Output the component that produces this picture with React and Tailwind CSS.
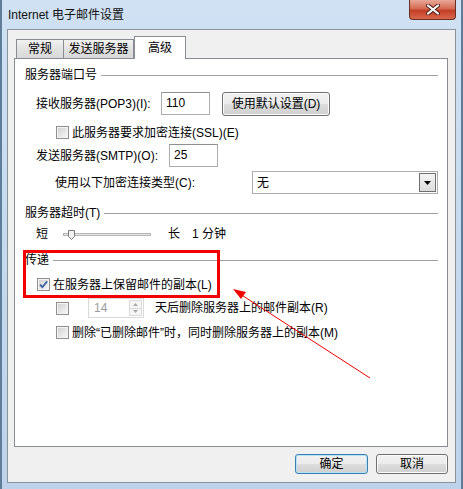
import React from 'react';

const Checkbox = ({ checked }) => (
  <span className="flex h-[13px] w-[13px] shrink-0 items-center justify-center border border-[#8f8f8f] bg-white">
    <span className="flex h-[11px] w-[11px] items-center justify-center border border-[#f4f4f4] bg-gradient-to-br from-[#d2d2d2] to-[#f6f6f6]">
      {checked && (
        <svg width="9" height="9" viewBox="0 0 9 9">
          <path d="M1 4.6 L3.4 7.2 L8.2 1.2" fill="none" stroke="#3b5ea3" strokeWidth="1.8" />
        </svg>
      )}
    </span>
  </span>
);

const Group = ({ title }) => (
  <div className="flex h-[16px] items-center">
    <span className="pr-[4px]">{title}</span>
    <span className="h-px flex-1 bg-[#a0a0a0]" />
  </div>
);

const btn =
  'flex items-center justify-center rounded-[3px] border bg-[linear-gradient(to_bottom,#f2f2f2_0%,#ebebeb_48%,#dddddd_52%,#cfcfcf_100%)]';

const App = () => {
  return (
    <div className="relative h-[489px] w-[463px] overflow-hidden border-x-2 border-[#5f7d99] bg-[linear-gradient(to_bottom,#cfe1f3,#bcd3eb)] text-[12px] leading-[14px] text-black [font-family:'Liberation_Sans','Noto_Sans_CJK_SC',sans-serif]">
      {/* title bar */}
      <div className="flex h-[29px] items-start justify-between">
        <span className="ml-[6px] mt-[8px] text-[12px] leading-[14px] text-[#111]">Internet 电子邮件设置</span>
        <div className="mr-[5px] flex h-[20px] w-[47px] items-center justify-center rounded-b-[4px] border border-t-0 border-[#6b2e22] bg-[linear-gradient(to_bottom,#e8a898_0%,#d46a52_45%,#c43f27_55%,#d8674c_100%)]">
          <svg width="14" height="11" viewBox="0 0 14 11">
            <path d="M2 1.5 L12 9.5 M12 1.5 L2 9.5" stroke="#4a1e16" strokeWidth="4" strokeLinecap="round" />
            <path d="M2 1.5 L12 9.5 M12 1.5 L2 9.5" stroke="#ffffff" strokeWidth="2.2" strokeLinecap="round" />
          </svg>
        </div>
      </div>

      {/* dialog body */}
      <div className="mx-[5px] flex h-[454px] flex-col border border-[#8a929a] bg-[#f0f0f0]">
        {/* tabs */}
        <div className="ml-[8px] mt-[6px] flex h-[23px] items-end">
          <div className="mb-px flex h-[19px] w-[48px] items-center justify-center border border-b-0 border-[#898c95] bg-[linear-gradient(to_bottom,#f2f2f2,#e2e2e2_50%,#d8d8d8)]">
            常规
          </div>
          <div className="mb-px flex h-[19px] w-[70px] items-center justify-center border border-b-0 border-l-0 border-[#898c95] bg-[linear-gradient(to_bottom,#f2f2f2,#e2e2e2_50%,#d8d8d8)]">
            发送服务器
          </div>
          <div className="relative z-10 flex h-[23px] w-[52px] items-start justify-center border border-b-0 border-[#898c95] bg-white pt-[4px]">
            高级
          </div>
        </div>

        {/* panel */}
        <div className="-mt-px ml-[6px] mr-[7px] flex h-[389px] flex-col border border-[#898c95] bg-white pl-[10px] pr-[9px] pt-[8px]">
          <Group title="服务器端口号" />

          <div className="ml-[11px] mt-[9px] flex h-[24px] items-center">
            <span className="w-[125px]">接收服务器(POP3)(I):</span>
            <div className="h-[23px] w-[49px] self-start border border-[#abadb3] border-t-[#8e8f8f] pl-[4px] leading-[20px]">110</div>
            <button className={`${btn} ml-[12px] h-[24px] w-[108px] border-[#707070] shadow-[inset_0_0_0_1px_#fbfbfb]`}>
              使用默认设置(D)
            </button>
          </div>

          <div className="ml-[31px] mt-[10px] flex h-[13px] items-center gap-[3px]">
            <Checkbox />
            <span>此服务器要求加密连接(SSL)(E)</span>
          </div>

          <div className="ml-[11px] mt-[5px] flex h-[23px] items-center">
            <span className="w-[133px]">发送服务器(SMTP)(O):</span>
            <div className="h-[23px] w-[49px] border border-[#abadb3] border-t-[#8e8f8f] pl-[4px] leading-[20px]">25</div>
          </div>

          <div className="ml-[30px] mt-[4px] flex h-[23px] items-center">
            <span className="w-[197px]">使用以下加密连接类型(C):</span>
            <div className="flex h-[23px] w-[186px] items-center justify-between border border-[#abadb3] p-px">
              <span className="pl-[3px]">无</span>
              <span className="flex h-[19px] w-[17px] items-center justify-center border border-[#707070] bg-[linear-gradient(to_bottom,#f4f4f4,#dcdcdc)]">
                <svg width="7" height="4" viewBox="0 0 7 4">
                  <path d="M0 0 H7 L3.5 4 Z" fill="#000" />
                </svg>
              </span>
            </div>
          </div>

          <div className="mt-[11px]">
            <Group title="服务器超时(T)" />
          </div>

          <div className="ml-[11px] mt-[5px] flex h-[16px] items-center">
            <span>短</span>
            <div className="relative ml-[15px] h-[16px] w-[88px]">
              <div className="absolute left-0 right-0 top-[7px] h-[3px] border border-[#b4b4b4] bg-[#e6e6e6]" />
              <svg className="absolute left-[5px] top-[4px]" width="7" height="10" viewBox="0 0 7 10">
                <path d="M0.5 0.5 H6.5 V6.5 L3.5 9.5 L0.5 6.5 Z" fill="#f1f1f1" stroke="#7a7a7a" />
              </svg>
            </div>
            <span className="ml-[17px]">长</span>
            <span className="ml-[12px]">1 分钟</span>
          </div>

          <div className="mt-[10px]">
            <Group title="传递" />
          </div>

          <div className="ml-[12px] mt-[10px] flex h-[13px] items-center gap-[3px]">
            <Checkbox checked />
            <span>在服务器上保留邮件的副本(L)</span>
          </div>

          <div className="ml-[31px] mt-[7px] flex h-[20px] items-center">
            <Checkbox />
            <div className="ml-[19px] flex h-[20px] w-[56px] border border-[#d9d9d9]">
              <span className="flex-1 pl-[5px] leading-[18px] text-[#9b9b9b]">14</span>
              <div className="flex w-[15px] flex-col p-px">
                <span className="flex flex-1 items-center justify-center border border-[#dadada] bg-[#f6f6f6]">
                  <svg width="5" height="3" viewBox="0 0 5 3"><path d="M0 3 H5 L2.5 0 Z" fill="#a8a8a8" /></svg>
                </span>
                <span className="flex flex-1 items-center justify-center border border-t-0 border-[#dadada] bg-[#f6f6f6]">
                  <svg width="5" height="3" viewBox="0 0 5 3"><path d="M0 0 H5 L2.5 3 Z" fill="#a8a8a8" /></svg>
                </span>
              </div>
            </div>
            <span className="ml-[11px]">天后删除服务器上的邮件副本(R)</span>
          </div>

          <div className="ml-[31px] mt-[8px] flex h-[13px] items-center gap-[3px]">
            <Checkbox />
            <span>删除“已删除邮件”时，同时删除服务器上的副本(M)</span>
          </div>
        </div>

        {/* buttons */}
        <div className="mr-[7px] mt-[7px] flex justify-end gap-[8px]">
          <button className={`${btn} h-[20px] w-[73px] border-[#3c7fb1] shadow-[inset_0_0_0_1px_#b4e3f8]`}>确定</button>
          <button className={`${btn} h-[20px] w-[72px] border-[#707070] shadow-[inset_0_0_0_1px_#fbfbfb]`}>取消</button>
        </div>
      </div>

      {/* annotation */}
      <div className="absolute left-[21px] top-[250px] h-[48px] w-[197px] border-[3px] border-[#f20000]" />
      <svg className="pointer-events-none absolute left-[-2px] top-0" width="463" height="489" viewBox="0 0 463 489">
        <line x1="370" y1="378" x2="240" y2="294" stroke="#f00000" strokeWidth="1" />
        <path d="M233 289 L246 292 L241 299 Z" fill="#f00000" />
      </svg>
    </div>
  );
};

export default App;
